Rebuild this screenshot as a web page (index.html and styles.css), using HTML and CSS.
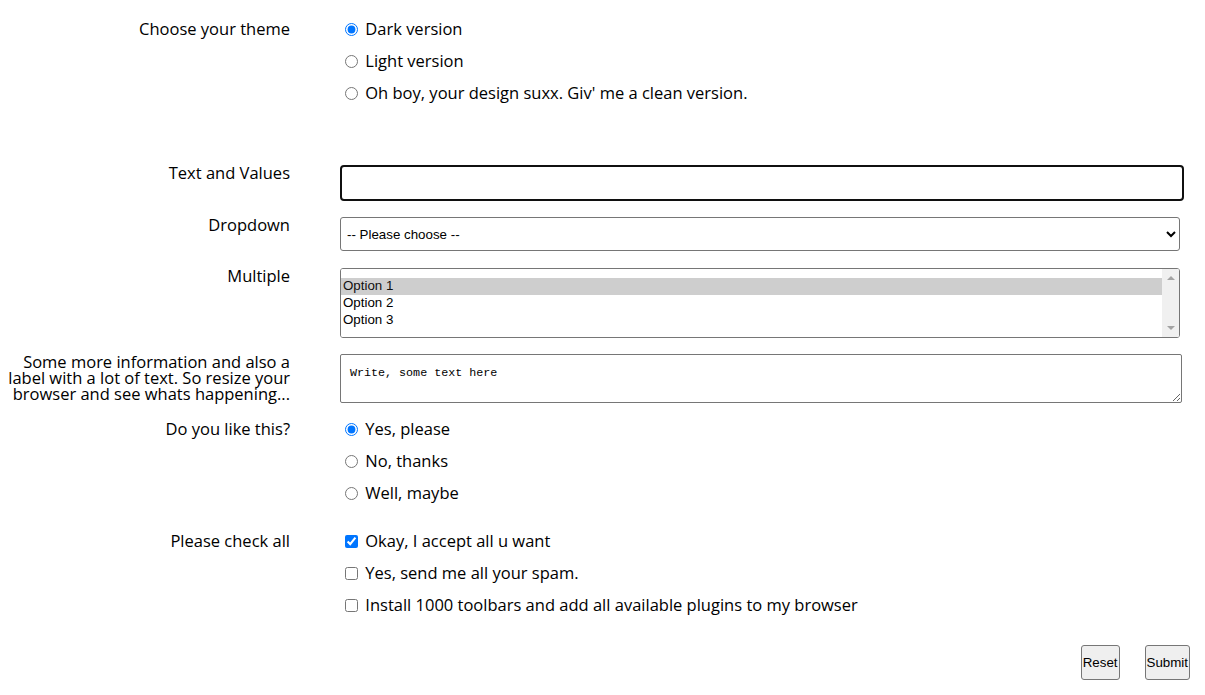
FILE: index.html
```html
<!DOCTYPE html>
<html lang="en">
<head>
<meta charset="utf-8">
<title>Form</title>
<link rel="stylesheet" href="styles.css">
</head>
<body>
<form class="form">
  <div class="label">Choose your theme</div>
  <div class="choices theme">
    <label class="choice"><input type="radio" name="theme" checked> Dark version</label>
    <label class="choice"><input type="radio" name="theme"> Light version</label>
    <label class="choice"><input type="radio" name="theme"> Oh boy, your design suxx. Giv' me a clean version.</label>
  </div>

  <label class="label" for="txt">Text and Values</label>
  <div class="control"><input id="txt" class="text" type="text"></div>

  <label class="label" for="dd">Dropdown</label>
  <div class="control">
    <select id="dd" class="dropdown">
      <option>-- Please choose --</option>
      <option>Option 1</option>
      <option>Option 2</option>
    </select>
  </div>

  <label class="label" for="multi">Multiple</label>
  <div class="control">
    <div class="listbox">
      <select id="multi" class="multi" multiple size="3">
        <option selected>Option 1</option>
        <option>Option 2</option>
        <option>Option 3</option>
      </select>
      <div class="scrollbar" aria-hidden="true"></div>
    </div>
  </div>

  <label class="label long" for="ta">Some more information and also a label with a lot of text. So resize your browser and see whats happening...</label>
  <div class="control"><textarea id="ta" class="area">Write, some text here</textarea></div>

  <div class="label">Do you like this?</div>
  <div class="choices">
    <label class="choice"><input type="radio" name="like" checked> Yes, please</label>
    <label class="choice"><input type="radio" name="like"> No, thanks</label>
    <label class="choice"><input type="radio" name="like"> Well, maybe</label>
  </div>

  <div class="label">Please check all</div>
  <div class="choices">
    <label class="choice"><input type="checkbox" checked> Okay, I accept all u want</label>
    <label class="choice"><input type="checkbox"> Yes, send me all your spam.</label>
    <label class="choice"><input type="checkbox"> Install 1000 toolbars and add all available plugins to my browser</label>
  </div>

  <div class="actions">
    <button type="reset" class="btn">Reset</button>
    <button type="submit" class="btn">Submit</button>
  </div>
</form>
</body>
</html>
```
FILE: styles.css
```css
html, body {
  margin: 0;
  padding: 0;
  background: #fff;
}

body {
  font-family: "Open Sans", "Noto Sans", sans-serif;
  font-size: 16.5px;
  color: #000;
}

.form {
  display: grid;
  grid-template-columns: 286px 1fr;
  column-gap: 50px;
  row-gap: 16px;
  padding: 21px 21px 0 4px;
}

.label {
  text-align: right;
  line-height: 16px;
}

.choices {
  display: flex;
  flex-direction: column;
}

.choices.theme {
  margin-bottom: 32px;
}

.choice {
  display: block;
  line-height: 16px;
  height: 16px;
  margin-bottom: 16px;
  white-space: nowrap;
}

.choice input {
  margin: 0 3px 0 5px;
  width: 13px;
  height: 13px;
  vertical-align: -1px;
}

.control {
  min-width: 0;
}

.text {
  display: block;
  box-sizing: border-box;
  width: 100%;
  height: 36px;
  border: 2px solid #101010;
  border-radius: 4px;
  outline: none;
  margin: 0;
}

.dropdown {
  display: block;
  box-sizing: border-box;
  width: calc(100% - 4px);
  height: 34px;
  margin: 0 0 1px;
  padding: 0 2px;
  border: 1px solid #767676;
  border-radius: 3px;
  font-family: "Liberation Sans", Arial, sans-serif;
  font-size: 13.33px;
  background: #fff;
  color: #000;
}

.listbox {
  position: relative;
  width: calc(100% - 4px);
}

.multi {
  display: block;
  box-sizing: border-box;
  width: 100%;
  height: 70px;
  margin: 0;
  padding: 9px 0 10px;
  border: 1px solid #767676;
  border-radius: 3px;
  font-family: "Liberation Sans", Arial, sans-serif;
  font-size: 13.33px;
}

.multi option {
  padding: 0 2px;
  line-height: 17px;
  min-height: 17px;
}

/* classic vertical scrollbar laid over the list's right edge */
.scrollbar {
  position: absolute;
  top: 1px;
  right: 1px;
  bottom: 1px;
  width: 17px;
  background: #f0f0f0;
  border-radius: 0 2px 2px 0;
}

.scrollbar::before,
.scrollbar::after {
  content: "";
  position: absolute;
  left: 5px;
  width: 0;
  height: 0;
  border-left: 4px solid transparent;
  border-right: 4px solid transparent;
}

.scrollbar::before {
  top: 7px;
  border-bottom: 4px solid #a3a3a3;
}

.scrollbar::after {
  bottom: 7px;
  border-top: 4px solid #a3a3a3;
}

.area {
  display: block;
  box-sizing: border-box;
  width: calc(100% - 2px);
  height: 49px;
  margin: 0 0 2px;
  padding: 11px 9px 4px;
  border: 1px solid #767676;
  border-radius: 2px;
  font-family: "Liberation Mono", "Courier New", monospace;
  font-size: 11.7px;
  color: #000;
}

.actions {
  grid-column: 1 / -1;
  display: flex;
  justify-content: flex-end;
  gap: 25px;
  margin-right: -6px;
}

.btn {
  box-sizing: border-box;
  height: 35px;
  padding: 0 1px;
  border: 1px solid #767676;
  border-radius: 3px;
  background: #efefef;
  font-family: "Liberation Sans", Arial, sans-serif;
  font-size: 13.33px;
  color: #000;
}
```
